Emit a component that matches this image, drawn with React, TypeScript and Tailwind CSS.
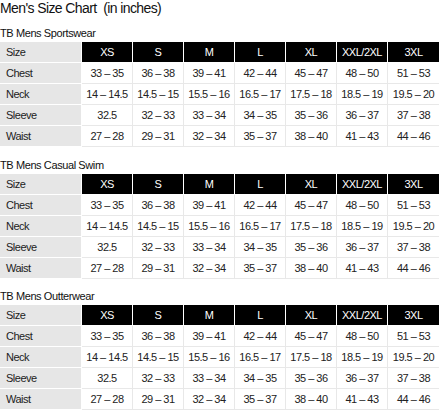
import React from "react";

const sizes = ["XS", "S", "M", "L", "XL", "XXL/2XL", "3XL"];
const rows: [string, string[]][] = [
  ["Chest", ["33 – 35", "36 – 38", "39 – 41", "42 – 44", "45 – 47", "48 – 50", "51 – 53"]],
  ["Neck", ["14 – 14.5", "14.5 – 15", "15.5 – 16", "16.5 – 17", "17.5 – 18", "18.5 – 19", "19.5 – 20"]],
  ["Sleeve", ["32.5", "32 – 33", "33 – 34", "34 – 35", "35 – 36", "36 – 37", "37 – 38"]],
  ["Waist", ["27 – 28", "29 – 31", "32 – 34", "35 – 37", "38 – 40", "41 – 43", "44 – 46"]],
];

function Chart() {
  return (
    <table className="w-[439px] border-separate border-spacing-0 table-fixed text-[11px] tracking-[-0.5px] text-[#222]">
      <colgroup>
        <col className="w-[82px]" />
        {sizes.map((s) => (
          <col key={s} className="w-[51px]" />
        ))}
      </colgroup>
      <tbody>
        <tr className="h-[21px]">
          <td className="bg-[#e6e6e6] border-r border-b border-white pl-[6px] p-0 leading-[20px] text-left">Size</td>
          {sizes.map((s) => (
            <td key={s} className="bg-black text-white border-r border-b border-white p-0 text-center leading-[20px] last:border-r-0">
              {s}
            </td>
          ))}
        </tr>
        {rows.map(([label, vals]) => (
          <tr key={label} className="h-[21px]">
            <td className="bg-[#e6e6e6] border-r border-b border-white pl-[6px] p-0 leading-[20px] text-left">{label}</td>
            {vals.map((v, i) => (
              <td key={i} className="bg-white border-r border-b border-[#e8e8e8] p-0 text-center leading-[20px] last:border-r-0 whitespace-nowrap">
                {v}
              </td>
            ))}
          </tr>
        ))}
      </tbody>
    </table>
  );
}

export default function App() {
  return (
    <div className="w-[439px] h-[410px] overflow-hidden bg-white font-['Liberation_Sans',Arial,sans-serif] text-[#111]">
      <div className="h-[24px] text-[14px] leading-[16px] tracking-[-0.6px]">Men's Size Chart&nbsp; (in inches)</div>
      <div className="h-[18px] text-[11px] leading-[18px] tracking-[-0.4px]">TB Mens Sportswear</div>
      <Chart />
      <div className="h-[27px] pt-[9px] text-[11px] leading-[18px] tracking-[-0.4px]">TB Mens Casual Swim</div>
      <Chart />
      <div className="h-[26px] pt-[8px] text-[11px] leading-[18px] tracking-[-0.4px]">TB Mens Outterwear</div>
      <Chart />
    </div>
  );
}
